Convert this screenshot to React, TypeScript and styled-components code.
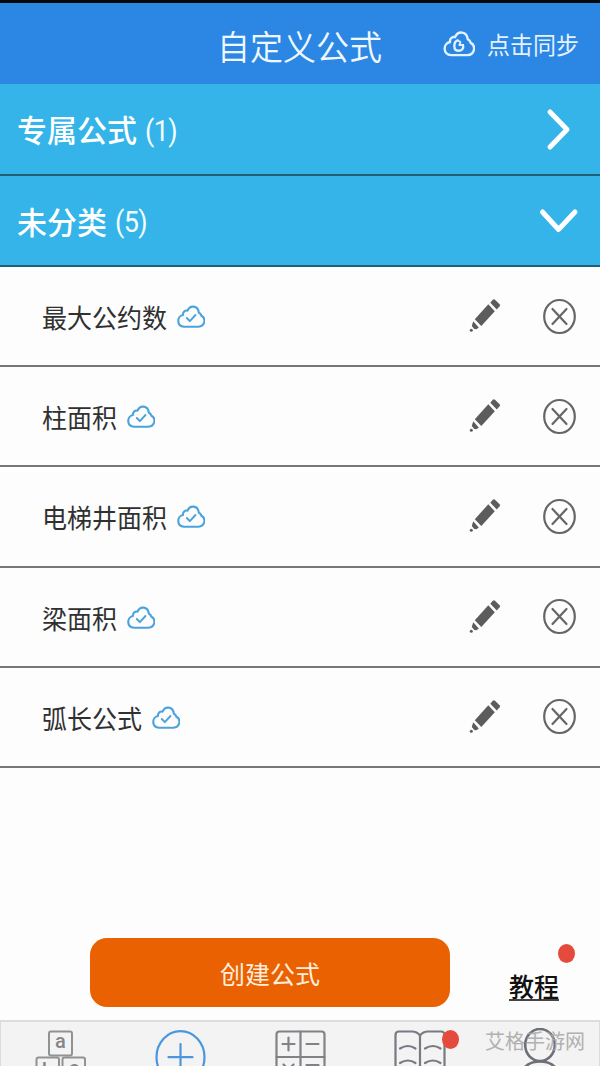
import React from 'react';
import styled, { createGlobalStyle } from 'styled-components';

const GlobalStyle = createGlobalStyle`
  * { box-sizing: border-box; }
  body {
    margin: 0;
    background: #fdfdfd;
    font-family: Roboto, "Noto Sans CJK SC", sans-serif;
  }
`;

const Screen = styled.div`
  width: 600px;
  height: 1066px;
  overflow: hidden;
  display: flex;
  flex-direction: column;
  background: #fdfdfd;
`;

const Label = styled.span<{ $size: number; $color: string; $weight?: number; $stretch?: number; $drop?: number }>`
  display: inline-block;
  font-size: ${p => p.$size}px;
  line-height: 1.2;
  color: ${p => p.$color};
  font-weight: ${p => p.$weight ?? 400};
  white-space: nowrap;
  transform: translateY(${p => p.$drop ?? 2}px) scaleY(${p => p.$stretch ?? 1.05});
`;

const Count = styled(Label)`
  letter-spacing: -0.6px;
`;

const Header = styled.header`
  flex: none;
  height: 84px;
  border-top: 3px solid #05080c;
  background: #2b87e3;
  display: grid;
  grid-template-columns: 1fr auto 1fr;
  align-items: center;
  padding: 2px 21px 0 20px;
`;

const SyncButton = styled.div`
  display: flex;
  align-items: center;
  justify-content: flex-end;
  gap: 12px;
`;

const Section = styled.div<{ $height: number }>`
  flex: none;
  height: ${p => p.$height}px;
  border-bottom: 2px solid #215f77;
  background: #34b4e8;
  display: flex;
  align-items: center;
  justify-content: space-between;
  padding: 0 20px 0 17px;
`;

const SectionTitle = styled.div`
  display: flex;
  align-items: center;
  gap: 8px;
`;

const Row = styled.div`
  flex: none;
  height: 100.2px;
  border-bottom: 2px solid #777;
  display: flex;
  align-items: center;
  padding: 0 23px 0 42px;
`;

const RowName = styled.div`
  flex: 1;
  display: flex;
  align-items: center;
  gap: 10px;
`;

const RowActions = styled.div`
  display: flex;
  align-items: center;
  gap: 41px;
`;

const Footer = styled.div`
  flex: 1;
  display: flex;
  align-items: flex-end;
  padding: 0 0 13px 90px;
`;

const CreateButton = styled.div`
  width: 360px;
  height: 69px;
  border-radius: 17px;
  background: #e96100;
  display: flex;
  align-items: center;
  justify-content: center;
  padding-top: 3px;
`;

const Tutorial = styled.div`
  position: relative;
  margin-left: 59px;
  height: 36px;
`;

const Underlined = styled.div`
  border-bottom: 2px solid #444;
  height: 30px;
  line-height: 1;
`;

const Dot = styled.i<{ $top: number; $left: number }>`
  position: absolute;
  top: ${p => p.$top}px;
  left: ${p => p.$left}px;
  width: 17px;
  height: 19px;
  border-radius: 50%;
  background: #e54b3c;
`;

const TabBar = styled.nav`
  position: relative;
  flex: none;
  height: 46px;
  border: 2px solid #dcdcdc;
  border-width: 2px 1px 0;
  background: #f3f3f3;
  display: grid;
  grid-template-columns: repeat(5, 1fr);
  overflow: hidden;
`;

const Tab = styled.div`
  position: relative;
  display: flex;
  justify-content: center;
  padding-top: 8px;
`;

const ProfileTab = styled(Tab)`
  padding: 6px 0 0 2px;
`;

const Watermark = styled.div`
  position: absolute;
  right: 14px;
  top: 7px;
  opacity: 0.9;
`;

const Icon = styled.svg`
  display: block;
  flex: none;
  fill: none;
  stroke-linecap: round;
  stroke-linejoin: round;
`;

const cloud = 'M7 22 C-0.5 21.5 -0.5 11.5 6 10.3 C5.5 7 8.5 5.2 10.5 6 C13 0 21 0.500 21.800 8 C24 8.800 24 9.800 24.200 10.800 C29.500 13.500 28 21.500 21.500 22 Z';

const CloudCheck = () => (
  <Icon width="28" height="24" viewBox="0 0 28 24" stroke="#4ba3dc" strokeWidth="2.100">
    <path d={cloud} transform="translate(0 0.700)" />
    <path d="M9.800 14 L12.800 17.200 L18.500 11" strokeWidth="1.900" />
  </Icon>
);

const CloudSync = () => (
  <Icon width="32" height="27" viewBox="0 0 28 24" stroke="#e4f2ff" strokeWidth="2.100">
    <path d={cloud} transform="translate(0 -0.500)" />
    <path d="M12.800 8.300 C9 9.500 8.600 17.500 13.300 17.600 C16.600 17.600 18.300 15.500 17.600 12.600" />
    <path d="M12.800 8.300 L15.300 9.800 L14.300 12.600 L17.600 12.300" strokeWidth="1.600" />
  </Icon>
);

const Pencil = () => (
  <Icon width="32" height="36" viewBox="0 0 32 36">
    <g fill="#5c5c5c">
      <path d="M19.300 6.200 L25.800 13.300 L12.300 28 L5.800 21.300 Z" />
      <path d="M21.300 4.700 L23.800 1.700 Q24.900 0.800 26 1.800 L30.600 6.300 Q31.400 7.300 30.600 8.300 L27.800 11.600 Z" />
      <path d="M4.200 23.200 L9.800 29.600 L7.500 31.200 L5.300 31 L2.800 28 Z" />
      <circle cx="2.300" cy="32.200" r="1.500" />
    </g>
  </Icon>
);

const Remove = () => (
  <Icon width="35" height="37" viewBox="0 0 35 37" stroke="#666" strokeWidth="2.200">
    <ellipse cx="17.500" cy="18.500" rx="15.300" ry="16.500" />
    <path d="M10.500 11 L24.500 26 M24.500 11 L10.500 26" />
  </Icon>
);

const Blocks = () => (
  <Icon width="52" height="50" viewBox="0 0 52 50" stroke="#919294" strokeWidth="2">
    <rect x="14" y="1.500" width="23" height="24" rx="2" />
    <rect x="1.500" y="27.500" width="22.500" height="24" rx="2" />
    <rect x="27.500" y="27.500" width="22.500" height="24" rx="2" />
    <g fill="#858688" stroke="none" fontFamily="Roboto, sans-serif" fontWeight="500" fontSize="20" textAnchor="middle">
      <text x="25.500" y="18">a</text>
      <text x="12.500" y="47">b</text>
      <text x="39" y="44.500">c</text>
    </g>
  </Icon>
);

const AddCircle = () => (
  <Icon width="52" height="56" viewBox="0 0 52 56" stroke="#4a97dd" strokeWidth="2.200">
    <ellipse cx="26.500" cy="27.200" rx="24" ry="26" />
    <path d="M14.500 27.200 H38.500 M26.500 14.200 V40.200" />
  </Icon>
);

const Calculator = () => (
  <Icon width="52" height="54" viewBox="0 0 52 54" stroke="#808286" strokeWidth="2.200">
    <rect x="2.500" y="1.500" width="48" height="51" rx="3" />
    <path d="M26.500 1.500 V52 M2.500 27 H50.500 M8.500 14 H20.500 M14.500 7.500 V20.500 M32.500 14 H44.500 M9.500 34.500 L19.500 44.500 M19.500 34.500 L9.500 44.500 M32.500 35 H44.500 M32.500 43 H44.500" />
  </Icon>
);

const Book = () => (
  <Icon width="54" height="54" viewBox="0 0 54 54" stroke="#777a80" strokeWidth="2.200">
    <path d="M27 5.500 Q24 1.500 19 1.500 H6 Q2.500 1.500 2.500 5 V52 H51.500 V5 Q51.500 1.500 48 1.500 H35 Q30 1.500 27 5.500 V52" />
    <path d="M7 18.500 Q15 13.500 22.500 18.500 M32 18.500 Q40 13.500 47.500 18.500 M7 33 Q15 28 22.500 33 M32 33 Q40 28 47.500 33" />
  </Icon>
);

const Person = () => (
  <Icon width="52" height="56" viewBox="0 0 52 56" stroke="#6d7078" strokeWidth="2.600">
    <ellipse cx="26" cy="17" rx="14.800" ry="16" />
    <path d="M6 52 Q8 33.500 26 33.500 Q44 33.500 46 52" />
  </Icon>
);

const formulas = ['最大公约数', '柱面积', '电梯井面积', '梁面积', '弧长公式'];

export default function App() {
  return (
    <Screen>
      <GlobalStyle />
      <Header>
        <span />
        <Label $size={33} $color="#f0f8ff" $weight={350} $stretch={1.05} $drop={3.5}>自定义公式</Label>
        <SyncButton>
          <CloudSync />
          <Label $size={23} $color="#e4f2ff" $stretch={1.02} $drop={2}>点击同步</Label>
        </SyncButton>
      </Header>

      <Section $height={92}>
        <SectionTitle>
          <Label $size={30} $color="#fff" $weight={500} $stretch={1.02} $drop={3}>专属公式</Label>
          <Count $size={27} $color="#f5fcff" $stretch={1.08} $drop={2}>(1)</Count>
        </SectionTitle>
        <Icon width="44" height="44" viewBox="0 0 44 44" stroke="#fff" strokeWidth="5">
          <path d="M14 5 L31 22.500 L14 40" />
        </Icon>
      </Section>
      <Section $height={91}>
        <SectionTitle>
          <Label $size={30} $color="#fff" $weight={500} $stretch={1.02} $drop={2.5}>未分类</Label>
          <Count $size={27} $color="#f5fcff" $stretch={1.08}>(5)</Count>
        </SectionTitle>
        <Icon width="44" height="44" viewBox="0 0 44 44" stroke="#fff" strokeWidth="5">
          <path d="M6.500 13 L22.500 30.500 L39 13" />
        </Icon>
      </Section>

      {formulas.map(name => (
        <Row key={name}>
          <RowName>
            <Label $size={25} $color="#303030" $drop={3.5}>{name}</Label>
            <CloudCheck />
          </RowName>
          <RowActions>
            <Pencil />
            <Remove />
          </RowActions>
        </Row>
      ))}

      <Footer>
        <CreateButton>
          <Label $size={25} $color="#ffeedd" $stretch={1.02}>创建公式</Label>
        </CreateButton>
        <Tutorial>
          <Underlined>
            <Label $size={25} $color="#111" $weight={500} $drop={2.5}>教程</Label>
          </Underlined>
          <Dot $top={-27} $left={49} />
        </Tutorial>
      </Footer>

      <TabBar>
        <Tab><Blocks /></Tab>
        <Tab><AddCircle /></Tab>
        <Tab><Calculator /></Tab>
        <Tab><Book /><Dot $top={8} $left={82} /></Tab>
        <ProfileTab><Person /></ProfileTab>
        <Watermark><Label $size={20} $color="#aaa" $stretch={1} $drop={1}>艾格手游网</Label></Watermark>
      </TabBar>
    </Screen>
  );
}
